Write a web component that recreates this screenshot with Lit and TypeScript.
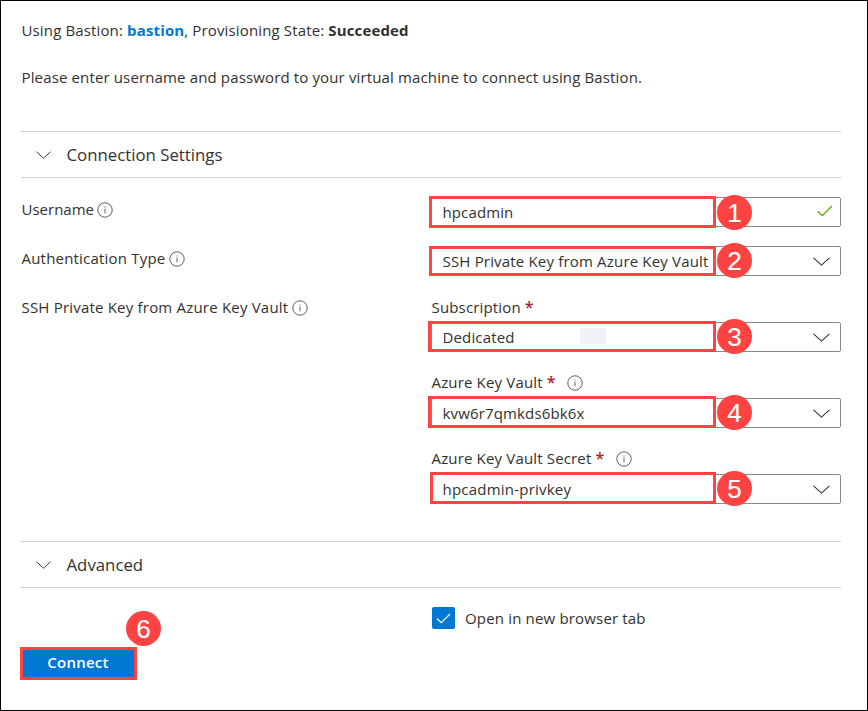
import { LitElement, html, svg, css, nothing } from "lit";
import { customElement } from "lit/decorators.js";

const chevron = (cls: string) => html`<svg class=${cls} viewBox="0 0 16 8" fill="none" stroke="currentColor" stroke-width="1">${svg`<path d="M0.5 0.5 L8 7.4 L15.5 0.5"/>`}</svg>`;

const info = (cls = "") => html`<svg class="info ${cls}" viewBox="0 0 16 16" fill="none" stroke="#605e5c" stroke-width="1"><circle cx="8" cy="8" r="7.2"/><path d="M8 6.7V11.4M8 4.5V5.6"/></svg>`;

@customElement("app-root")
export class AppRoot extends LitElement {
  static styles = css`
    :host { display: block; }
    * { box-sizing: border-box; }
    .page {
      width: 868px; height: 711px; border: 1px solid #000; background: #fff; overflow: hidden;
      padding: 0 26px 0 20px; color: #323130;
      font: 15px/20px "Open Sans", "Noto Sans", sans-serif; letter-spacing: 0.14px;
      display: flex; flex-direction: column; white-space: nowrap;
    }
    .status { margin: 19px 0 0 0.5px; }
    .status .name { color: #0078d4; font-weight: 700; }
    .status .state { font-weight: 700; }
    .hint { margin: 27px 0 0 0.5px; }
    .section {
      height: 47px; border-top: 1px solid #d2d0ce; border-bottom: 1px solid #d2d0ce;
      display: flex; align-items: center; gap: 15.5px; padding-left: 15px;
      font-size: 16.8px; letter-spacing: 0; flex: none;
    }
    .settings { margin-top: 44px; }
    .advanced { margin-top: 37px; }
    .small { width: 15px; height: 8px; }
    .form { display: grid; grid-template-columns: 410px 410px; margin-top: 19px; row-gap: 19px; }
    .label { display: flex; align-items: center; height: 20px; margin: 2px 0 0 0.5px; gap: 4px; letter-spacing: 0.2px; }
    .label .info { margin-top: 1px; }
    .label.tight { letter-spacing: 0; gap: 3px; }
    .group { display: flex; flex-direction: column; }
    .sub { display: flex; align-items: center; height: 20px; margin: 2px 0 5px 0.5px; letter-spacing: 0.16px; }
    .control + .sub { margin: 1px 0 6px 0.5px; }
    .sub + .control { margin-bottom: 19px; }
    .group .control:last-child { margin-bottom: 0; }
    .star { color: #a4262c; font-weight: 600; font-size: 16px; margin: -1px 0 0 4px; }
    .info { width: 16px; height: 16px; flex: none; }
    .info.far { margin: 1px 0 0 11.5px; }
    .control {
      position: relative; height: 30px; border: 1px solid #8a8886; border-radius: 2px;
      display: flex; align-items: center; justify-content: space-between; padding: 0 10px 0 10.5px;
    }
    .value { display: flex; align-items: center; }
    .chip { width: 26px; height: 16px; background: #f1f2f5; margin: -2px 0 0 65.5px; }
    .arrow { width: 17px; height: 9px; }
    .check { width: 16px; height: 12px; margin-right: -3px; margin-top: -3px; }
    .mark { position: absolute; border: 3px solid #ff4343; right: 124px; }
    .m1 { left: -3px; top: -2px; height: 32px; }
    .m2 { left: -3px; top: -1px; height: 30px; }
    .m3 { left: -4px; top: -2px; height: 31px; }
    .m4 { left: -4px; top: -3px; height: 32px; }
    .m5 { left: -2px; top: -3px; height: 32px; }
    .badge {
      position: absolute; width: 35px; height: 35px; border-radius: 50%; background: #ff4343; color: #fff;
      font: 26px/36px "Liberation Sans", Arial, sans-serif; letter-spacing: 0; text-align: center; left: 285px; top: -4px;
      -webkit-text-stroke: 0.15px #fff;
    }
    .b1 { top: -3px; }
    .footer { display: grid; grid-template-columns: 411px 1fr; margin-top: 19px; }
    .tab { display: flex; align-items: center; gap: 10px; height: 22px; letter-spacing: 0.17px; }
    .box { width: 23px; height: 22px; background: #0078d4; border-radius: 2px; display: flex; align-items: center; justify-content: center; }
    .tick { width: 15px; height: 11px; }
    .connect {
      position: relative; width: 117px; height: 33px; margin: 40px 0 0 -1px; padding: 0 1px 2px 0;
      border: 3px solid #ff4343; background: #0078d4; color: #fff;
      font: 600 15px/25px "Open Sans", "Noto Sans", sans-serif; letter-spacing: 0.25px;
    }
    .connect .b6 { left: 103px; top: -39px; }
  `;

  private select(value: string, n: number, ls: string, chip = false) {
    return html`<div class="control">
      <span class="value"><span style="letter-spacing:${ls}">${value}</span>${chip ? html`<span class="chip"></span>` : nothing}</span>
      ${n === 1
        ? html`<svg class="check" viewBox="0 0 16 12" fill="none" stroke="#57a300" stroke-width="1.3"><path d="M0.8 6.2 L5.3 10.6 L15 1"/></svg>`
        : chevron("arrow")}
      <span class="mark m${n}"></span><span class="badge b${n}">${n}</span>
    </div>`;
  }

  render() {
    return html`<div class="page">
      <div class="status">Using Bastion: <span class="name">bastion</span>, Provisioning State: <span class="state">Succeeded</span></div>
      <div class="hint">Please enter username and password to your virtual machine to connect using Bastion.</div>
      <div class="section settings">${chevron("small")}<span>Connection Settings</span></div>
      <div class="form">
        <div class="label tight"><span>Username</span>${info()}</div>
        ${this.select("hpcadmin", 1, "0.12px")}
        <div class="label"><span>Authentication Type</span>${info()}</div>
        ${this.select("SSH Private Key from Azure Key Vault", 2, "0.18px")}
        <div class="label"><span>SSH Private Key from Azure Key Vault</span>${info()}</div>
        <div class="group">
          <div class="sub"><span>Subscription</span><span class="star">*</span></div>
          ${this.select("Dedicated", 3, "0.15px", true)}
          <div class="sub"><span>Azure Key Vault</span><span class="star">*</span>${info("far")}</div>
          ${this.select("kvw6r7qmkds6bk6x", 4, "0.15px")}
          <div class="sub"><span>Azure Key Vault Secret</span><span class="star">*</span>${info("far")}</div>
          ${this.select("hpcadmin-privkey", 5, "0.22px")}
        </div>
      </div>
      <div class="section advanced">${chevron("small")}<span>Advanced</span></div>
      <div class="footer">
        <button class="connect">Connect<span class="badge b6">6</span></button>
        <div class="tab"><span class="box"><svg class="tick" viewBox="0 0 15 11" fill="none" stroke="#fff" stroke-width="1.1"><path d="M1 5.5 L5.3 9.7 L14 1"/></svg></span><span>Open in new browser tab</span></div>
      </div>
    </div>`;
  }
}
